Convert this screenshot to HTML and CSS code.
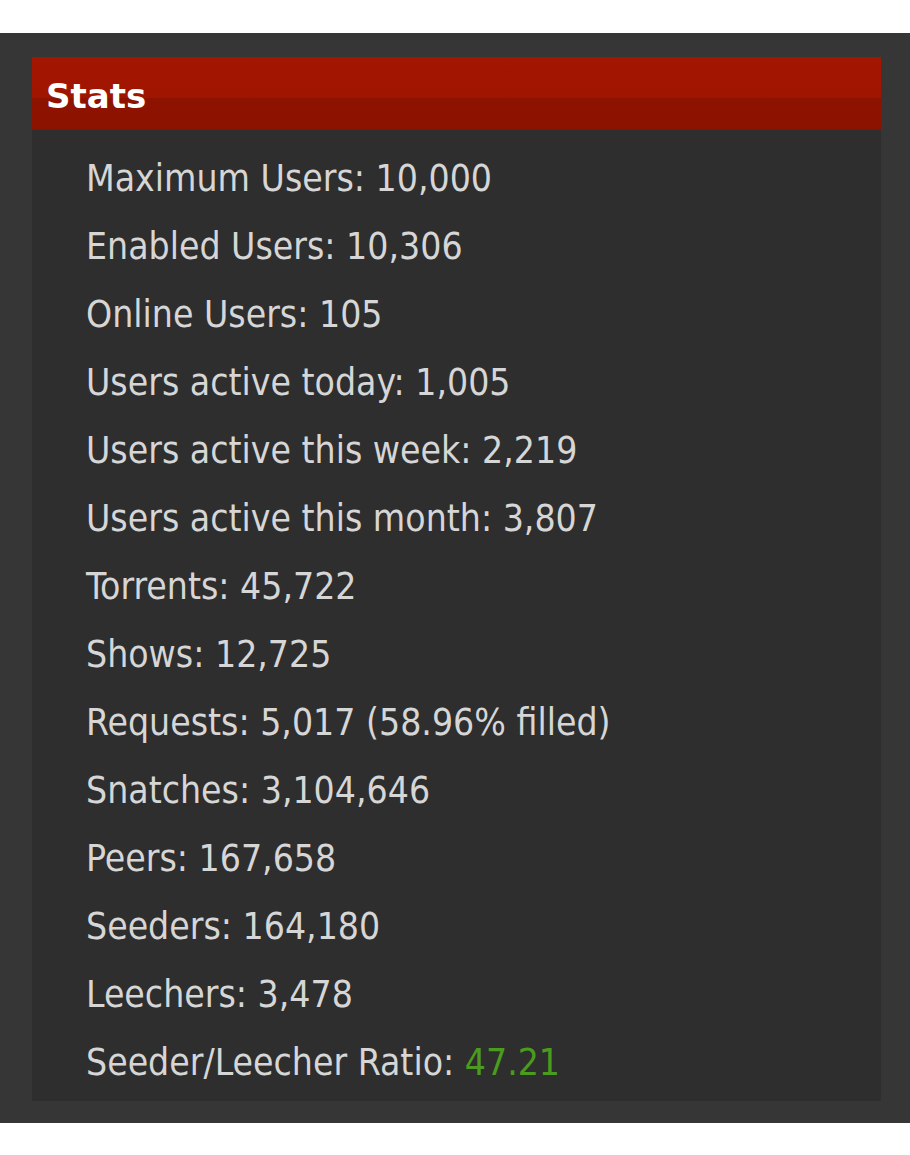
FILE: index.html
```html
<!DOCTYPE html>
<html>
<head>
<meta charset="utf-8">
<link rel="stylesheet" href="styles.css">
</head>
<body>
<div class="page">
  <div class="panel">
    <div class="panel-head">Stats</div>
    <ul class="stats">
      <li>Maximum Users: 10,000</li>
      <li>Enabled Users: 10,306</li>
      <li>Online Users: 105</li>
      <li>Users active today: 1,005</li>
      <li>Users active this week: 2,219</li>
      <li>Users active this month: 3,807</li>
      <li>Torrents: 45,722</li>
      <li>Shows: 12,725</li>
      <li>Requests: 5,017 (58.96% filled)</li>
      <li>Snatches: 3,104,646</li>
      <li>Peers: 167,658</li>
      <li>Seeders: 164,180</li>
      <li>Leechers: 3,478</li>
      <li>Seeder/Leecher Ratio: <span class="good">47.21</span></li>
    </ul>
  </div>
</div>
</body>
</html>
```
FILE: styles.css
```css
html, body {
  margin: 0;
  padding: 0;
  background: #ffffff;
}
body {
  font-family: "DejaVu Sans Condensed", "DejaVu Sans", Verdana, sans-serif;
}
.page {
  margin-top: 33px;
  background: #363636;
  padding: 24px 29px 22px 32px;
}
.panel {
  background: #2e2e2e;
}
.panel-head {
  height: 73px;
  box-sizing: border-box;
  background: linear-gradient(to bottom, #a31600 0%, #a01500 56%, #8e1200 56%, #8c1200 100%);
  color: #ffffff;
  font-family: "DejaVu Sans", Verdana, sans-serif;
  font-weight: bold;
  font-size: 34px;
  line-height: 68px;
  padding: 5px 0 0 14px;
}
.stats {
  list-style: none;
  margin: 0;
  padding: 15px 0 4px 54px;
  color: #d6d6d6;
  font-size: 37px;
  line-height: 68px;
}
.good {
  color: #4b9b1f;
}
```
